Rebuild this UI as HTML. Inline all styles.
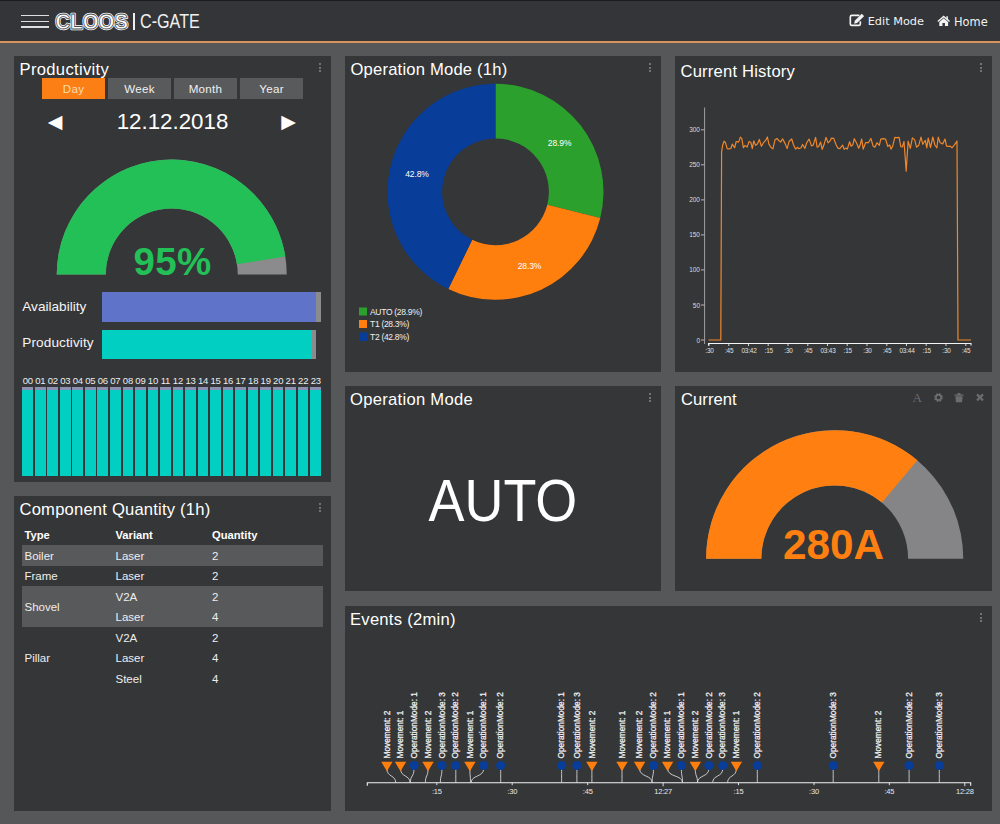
<!DOCTYPE html>
<html><head><meta charset="utf-8"><title>C-GATE</title>
<style>
*{box-sizing:border-box;margin:0;padding:0}
html,body{width:1000px;height:824px;overflow:hidden;background:#555759;font-family:"Liberation Sans",sans-serif;color:#fff}
#hdr{position:absolute;left:0;top:0;width:1000px;height:43px;background:#333538;border-top:1px solid #1c1c1e;border-bottom:2px solid #d6935e}
.panel{position:absolute;background:#343638}
.title{position:absolute;left:5.5px;top:4px;font-size:16.6px;line-height:20px;white-space:nowrap;color:#fff;letter-spacing:0.2px}
.dots{position:absolute;right:9.4px;top:7px;width:3px;height:9px}
.dots i{display:block;width:2px;height:2px;background:#707274;margin-bottom:1.5px}
.abs{position:absolute}
.btn{position:absolute;top:22px;width:63px;height:21px;background:#595a5c;color:#f0f0f0;font-size:11.6px;line-height:22px;text-align:center;letter-spacing:0.3px}
.btn.on{background:#fb7f15;color:#fbdcae}
.arr{font-family:"DejaVu Sans",sans-serif;font-size:19px;line-height:26px;color:#fff}
.lab{font-size:13.6px;line-height:18px;white-space:nowrap;color:#f4f4f4}
.hl{position:absolute;top:319px;font-size:9.5px;line-height:11px;width:10.5px;text-align:center;color:#eee;letter-spacing:-0.2px}
.hb{position:absolute;top:331px;width:10.8px;height:89px;background:#00cfc1}
.hb b{display:block;height:3px;background:#8d8fb3}
table{position:absolute;left:8px;top:28.5px;width:301px;border-collapse:collapse;font-size:11.5px;color:#eee}
td,th{height:20.5px;padding:1px 0 0 2.5px;text-align:left;vertical-align:middle;line-height:14px}
th{font-weight:bold;color:#fff;font-size:11.2px}
tr.g td{background:#58595b}
svg text{font-family:"Liberation Sans",sans-serif}
</style></head><body>
<div id="hdr">
<div class="abs" style="left:21px;top:13.7px;width:27.5px;height:1.7px;background:#dedede"></div>
<div class="abs" style="left:21px;top:19.6px;width:27.5px;height:1.7px;background:#dedede"></div>
<div class="abs" style="left:21px;top:25.2px;width:27.5px;height:1.7px;background:#dedede"></div>
<svg class="abs" style="left:50px;top:5px" width="90" height="30" viewBox="0 0 90 30"><g font-weight="bold" font-size="21.5"><text x="5.5" y="22.9" fill="#fff" stroke="#fff" stroke-width="2.4" stroke-linejoin="round" textLength="72.5" lengthAdjust="spacingAndGlyphs">CLOOS</text><text x="5.5" y="22.9" fill="none" stroke="#4a4c4f" stroke-width="0.8" textLength="72.5" lengthAdjust="spacingAndGlyphs">CLOOS</text></g></svg>
<div class="abs" style="left:133.3px;top:12px;width:1.4px;height:16.5px;background:#eee"></div>
<div class="abs" id="cgate" style="left:140px;top:8px;font-size:19.5px;line-height:24px;color:#f0f0f0;transform-origin:0 0;transform:scaleX(0.828);white-space:nowrap">C-GATE</div>
<svg class="abs" style="left:848.7px;top:12.3px" width="15.4" height="14.3" viewBox="0 0 14 13"><path d="M9.5 2.2H2.6Q1.2 2.2 1.2 3.6V9.9Q1.2 11.3 2.6 11.3H8.9Q10.3 11.3 10.3 9.9V7.6" fill="none" stroke="#f2f2f2" stroke-width="1.5"/><path d="M5.2 7L11.6 0.6L13.8 2.8L7.4 9.2L4.7 9.7Z" fill="#f2f2f2"/></svg>
<div class="abs" id="edit" style="left:867.7px;top:13.3px;font-family:'DejaVu Sans',sans-serif;font-size:11.3px;line-height:16px;color:#f2f2f2;white-space:nowrap">Edit Mode</div>
<svg class="abs" style="left:936.6px;top:13.8px" width="13.4" height="11.5" viewBox="0 0 14 12"><path d="M7 0.6L0.4 6.2L1.3 7.2L7 2.5L12.7 7.2L13.6 6.2L11.4 4.3V1.3H9.8V3Z" fill="#f2f2f2"/><path d="M2.4 7.2L7 3.5L11.6 7.2V11.4H8.3V8.3H5.7V11.4H2.4Z" fill="#f2f2f2"/></svg>
<div class="abs" id="home" style="left:954px;top:13.3px;font-family:'DejaVu Sans',sans-serif;font-size:11.4px;line-height:16px;color:#f2f2f2;white-space:nowrap">Home</div>
</div>
<div class="panel" id="p1" style="left:14px;top:56px;width:317px;height:426px"><div class="title" style="letter-spacing:0.32px">Productivity</div><div class="dots"><i></i><i></i><i></i></div>
<div class="btn on" style="left:28px">Day</div><div class="btn" style="left:94px">Week</div><div class="btn" style="left:160px">Month</div><div class="btn" style="left:226px">Year</div>
<div class="abs" id="date" style="left:0;width:317px;top:53px;text-align:center;font-size:22.3px;line-height:26px">12.12.2018</div>
<div class="abs arr" style="left:33.8px;top:52px">&#9664;</div>
<div class="abs arr" style="left:267.2px;top:52px">&#9654;</div>
<svg class="abs" style="left:0;top:100px" width="317" height="125" viewBox="0 100 317 125">
<path d="M42.75 218.5 A115 115 0 0 1 272.75 218.5 L223.75 218.5 A66 66 0 0 0 91.75 218.5 Z" fill="#8b8b8d"/>
<path d="M42.75 218.5 A115 115 0 0 1 271.33 200.51 L222.94 208.18 A66 66 0 0 0 91.75 218.5 Z" fill="#23bf57"/>
</svg>
<div class="abs" id="pct" style="left:0;width:317px;top:185.5px;text-align:center;font-size:38.5px;line-height:40px;font-weight:bold;color:#23bf57;letter-spacing:0.3px">95%</div>
<div class="abs lab" style="left:8.3px;top:241.5px">Availability</div>
<div class="abs lab" style="left:8.3px;top:278.4px;letter-spacing:0.1px">Productivity</div>
<div class="abs" style="left:88px;top:236px;width:219.2px;height:29.5px;background:#8b8b8d"><div style="width:213.7px;height:29.5px;background:#5f73c8"></div></div>
<div class="abs" style="left:88px;top:273.5px;width:214px;height:29.5px;background:#8b8b8d"><div style="width:209.5px;height:29.5px;background:#00cfc1"></div></div>
<span class="hl" style="left:8.5px">00</span><span class="hl" style="left:21.0px">01</span><span class="hl" style="left:33.5px">02</span><span class="hl" style="left:46.1px">03</span><span class="hl" style="left:58.6px">04</span><span class="hl" style="left:71.1px">05</span><span class="hl" style="left:83.6px">06</span><span class="hl" style="left:96.1px">07</span><span class="hl" style="left:108.7px">08</span><span class="hl" style="left:121.2px">09</span><span class="hl" style="left:133.7px">10</span><span class="hl" style="left:146.2px">11</span><span class="hl" style="left:158.7px">12</span><span class="hl" style="left:171.3px">13</span><span class="hl" style="left:183.8px">14</span><span class="hl" style="left:196.3px">15</span><span class="hl" style="left:208.8px">16</span><span class="hl" style="left:221.3px">17</span><span class="hl" style="left:233.9px">18</span><span class="hl" style="left:246.4px">19</span><span class="hl" style="left:258.9px">20</span><span class="hl" style="left:271.4px">21</span><span class="hl" style="left:283.9px">22</span><span class="hl" style="left:296.5px">23</span><div class="hb" style="left:8.3px"><b></b></div><div class="hb" style="left:20.8px"><b></b></div><div class="hb" style="left:33.3px"><b></b></div><div class="hb" style="left:45.9px"><b></b></div><div class="hb" style="left:58.4px"><b></b></div><div class="hb" style="left:70.9px"><b></b></div><div class="hb" style="left:83.4px"><b></b></div><div class="hb" style="left:95.9px"><b></b></div><div class="hb" style="left:108.5px"><b></b></div><div class="hb" style="left:121.0px"><b></b></div><div class="hb" style="left:133.5px"><b></b></div><div class="hb" style="left:146.0px"><b></b></div><div class="hb" style="left:158.5px"><b></b></div><div class="hb" style="left:171.1px"><b></b></div><div class="hb" style="left:183.6px"><b></b></div><div class="hb" style="left:196.1px"><b></b></div><div class="hb" style="left:208.6px"><b></b></div><div class="hb" style="left:221.1px"><b></b></div><div class="hb" style="left:233.7px"><b></b></div><div class="hb" style="left:246.2px"><b></b></div><div class="hb" style="left:258.7px"><b></b></div><div class="hb" style="left:271.2px"><b></b></div><div class="hb" style="left:283.7px"><b></b></div><div class="hb" style="left:296.3px"><b></b></div></div>
<div class="panel" id="p2" style="left:14px;top:496px;width:317px;height:315px"><div class="title">Component Quantity (1h)</div><div class="dots"><i></i><i></i><i></i></div>
<table><colgroup><col style="width:91px"><col style="width:96.5px"><col></colgroup>
<tr><th>Type</th><th>Variant</th><th>Quantity</th></tr>
<tr class="g"><td>Boiler</td><td>Laser</td><td>2</td></tr>
<tr><td>Frame</td><td>Laser</td><td>2</td></tr>
<tr class="g"><td rowspan="2">Shovel</td><td>V2A</td><td>2</td></tr>
<tr class="g"><td>Laser</td><td>4</td></tr>
<tr><td rowspan="3">Pillar</td><td>V2A</td><td>2</td></tr>
<tr><td>Laser</td><td>4</td></tr>
<tr><td>Steel</td><td>4</td></tr>
</table></div>
<div class="panel" id="p3" style="left:345px;top:56px;width:316px;height:316px"><div class="title">Operation Mode (1h)</div><div class="dots"><i></i><i></i><i></i></div>
<svg class="abs" style="left:0;top:0" width="316" height="316" viewBox="0 0 316 316">
<path d="M150.50 27.80 A108 108 0 0 1 255.27 162.00 L202.30 148.75 A53.4 53.4 0 0 0 150.50 82.40 Z" fill="#2ca02c"/><path d="M255.27 162.00 A108 108 0 0 1 103.29 232.94 L127.16 183.83 A53.4 53.4 0 0 0 202.30 148.75 Z" fill="#ff7f0e"/><path d="M103.29 232.94 A108 108 0 0 1 150.50 27.80 L150.50 82.40 A53.4 53.4 0 0 0 127.16 183.83 Z" fill="#083d99"/>
<g font-size="8.5" fill="#fff" text-anchor="middle" letter-spacing="-0.12"><text x="214.6" y="90.2">28.9%</text><text x="184.5" y="213">28.3%</text><text x="72" y="121">42.8%</text></g>
<rect x="14" y="251.5" width="8" height="8" fill="#2ca02c"/><rect x="14" y="264" width="8" height="8" fill="#ff7f0e"/><rect x="14" y="276.5" width="8" height="8.5" fill="#083d99"/>
<g font-size="8.5" fill="#f0f0f0" letter-spacing="-0.3"><text x="25" y="258.9">AUTO (28.9%)</text><text x="25" y="271.4">T1 (28.3%)</text><text x="25" y="283.9">T2 (42.8%)</text></g>
</svg></div>
<div class="panel" id="p4" style="left:675px;top:56px;width:317px;height:316px"><div class="title" style="top:5.5px">Current History</div><div class="dots"><i></i><i></i><i></i></div>
<svg class="abs" style="left:0;top:0" width="317" height="316" viewBox="0 0 317 316">
<line x1="29.6" x2="29.6" y1="51.5" y2="288" stroke="#a0a0a2" stroke-width="1"/>
<g stroke="#b5b5b7" stroke-width="1"><line x1="26" x2="29.5" y1="284.0" y2="284.0"/><line x1="26" x2="29.5" y1="249.0" y2="249.0"/><line x1="26" x2="29.5" y1="213.9" y2="213.9"/><line x1="26" x2="29.5" y1="178.9" y2="178.9"/><line x1="26" x2="29.5" y1="143.9" y2="143.9"/><line x1="26" x2="29.5" y1="108.8" y2="108.8"/><line x1="26" x2="29.5" y1="73.8" y2="73.8"/></g>
<path d="M33.5 289.5V287.5H296V289.5" fill="none" stroke="#f4f4f4" stroke-width="1.1"/>
<g stroke="#f4f4f4" stroke-width="0.8"><line x1="34.0" x2="34.0" y1="287.5" y2="290"/><line x1="53.8" x2="53.8" y1="287.5" y2="290"/><line x1="73.5" x2="73.5" y1="287.5" y2="290"/><line x1="93.2" x2="93.2" y1="287.5" y2="290"/><line x1="113.0" x2="113.0" y1="287.5" y2="290"/><line x1="132.8" x2="132.8" y1="287.5" y2="290"/><line x1="152.5" x2="152.5" y1="287.5" y2="290"/><line x1="172.2" x2="172.2" y1="287.5" y2="290"/><line x1="192.0" x2="192.0" y1="287.5" y2="290"/><line x1="211.8" x2="211.8" y1="287.5" y2="290"/><line x1="231.5" x2="231.5" y1="287.5" y2="290"/><line x1="251.2" x2="251.2" y1="287.5" y2="290"/><line x1="271.0" x2="271.0" y1="287.5" y2="290"/><line x1="290.8" x2="290.8" y1="287.5" y2="290"/></g>
<g font-size="6.5" fill="#dcdcdc" text-anchor="end"><text x="25" y="286.5">0</text><text x="25" y="251.5">50</text><text x="25" y="216.4">100</text><text x="25" y="181.4">150</text><text x="25" y="146.4">200</text><text x="25" y="111.3">250</text><text x="25" y="76.3">300</text></g>
<g font-size="6.4" fill="#e0e0e0" text-anchor="middle" letter-spacing="-0.15"><text x="34.5" y="296.8">:30</text><text x="54.2" y="296.8">:45</text><text x="74.0" y="296.8">03:42</text><text x="93.8" y="296.8">:15</text><text x="113.5" y="296.8">:30</text><text x="133.2" y="296.8">:45</text><text x="153.0" y="296.8">03:43</text><text x="172.8" y="296.8">:15</text><text x="192.5" y="296.8">:30</text><text x="212.2" y="296.8">:45</text><text x="232.0" y="296.8">03:44</text><text x="251.8" y="296.8">:15</text><text x="271.5" y="296.8">:30</text><text x="291.2" y="296.8">:45</text></g>
<path d="M33.5 284.0 L45.8 284.0 L46.6 96.2 L47.6 89.3 L49.1 85.2 L50.5 86.7 L52.2 92.7 L54.1 92.9 L55.9 92.5 L57.3 88.1 L59.6 91.8 L61.2 85.5 L63.6 86.1 L65.4 81.1 L66.8 82.6 L68.4 91.6 L69.9 89.5 L72.1 91.1 L74.1 85.4 L75.9 86.5 L77.3 92.7 L78.8 84.8 L80.6 89.4 L82.6 87.7 L84.3 83.4 L86.4 90.3 L88.4 86.8 L90.8 84.2 L92.4 81.0 L93.9 88.1 L96.1 91.5 L97.9 92.9 L100.0 83.8 L102.0 82.4 L103.7 84.6 L105.7 86.1 L107.6 82.8 L110.0 87.4 L112.1 92.6 L114.2 85.2 L116.7 83.0 L118.4 88.5 L120.5 93.1 L122.3 91.3 L123.8 92.7 L126.0 91.8 L127.6 88.5 L129.9 92.4 L131.8 86.5 L134.1 83.1 L136.5 89.9 L138.3 88.9 L140.6 81.3 L142.1 91.2 L143.7 90.5 L145.6 86.0 L147.2 93.4 L149.0 88.8 L151.0 81.4 L153.1 86.9 L155.1 84.9 L156.5 82.1 L158.7 82.4 L161.0 88.5 L162.8 92.1 L164.8 92.6 L166.2 90.8 L167.7 89.1 L169.1 93.4 L170.6 92.1 L172.3 93.1 L174.6 85.7 L176.1 90.2 L177.8 88.8 L179.3 82.7 L181.8 87.5 L183.7 92.3 L185.1 89.1 L186.7 83.0 L188.2 93.1 L190.6 86.7 L192.1 86.6 L193.4 86.7 L195.9 82.5 L198.1 90.1 L199.8 91.3 L202.0 86.7 L204.3 89.3 L205.8 83.2 L208.3 82.7 L210.6 83.1 L212.8 90.5 L214.7 88.9 L216.0 93.1 L217.7 90.1 L219.8 81.3 L221.6 81.6 L224.1 81.4 L225.8 90.6 L227.4 90.9 L229.0 85.5 L231.2 115.1 L233.1 85.2 L235.3 92.3 L237.4 81.9 L239.7 83.9 L241.5 91.2 L243.8 89.2 L246.0 81.2 L247.8 88.3 L250.3 84.3 L251.8 91.8 L253.2 82.0 L255.5 91.6 L257.8 81.0 L259.9 89.0 L261.9 91.8 L263.2 81.2 L265.2 86.8 L267.7 87.9 L270.0 83.0 L271.6 90.2 L273.2 90.4 L275.2 90.1 L277.0 91.8 L279.4 88.9 L281.3 86.1 L282.0 85.0 L283.0 284.0 L296.0 284.0" fill="none" stroke="#f0872b" stroke-width="1.2" stroke-linejoin="round"/>
</svg></div>
<div class="panel" id="p5" style="left:345px;top:386px;width:316px;height:205px"><div class="title" style="left:5px;letter-spacing:0.28px">Operation Mode</div><div class="dots"><i></i><i></i><i></i></div>
<div class="abs" id="auto" style="left:0;width:316px;top:80px;text-align:center;font-size:59.6px;line-height:70px;transform:scaleX(0.905);transform-origin:156.7px 0">AUTO</div></div>
<div class="panel" id="p6" style="left:675px;top:386px;width:317px;height:205px"><div class="title" style="left:6px;letter-spacing:0.05px">Current</div>
<svg class="abs" style="left:0;top:0" width="317" height="205" viewBox="0 0 317 205">
<path d="M31.10000000000005 172.79999999999995 A128.6 128.6 0 0 1 288.30000000000007 172.79999999999995 L233.10000000000005 172.79999999999995 A73.4 73.4 0 0 0 86.30000000000004 172.79999999999995 Z" fill="#858588"/><path d="M31.10000000000005 172.79999999999995 A128.6 128.6 0 0 1 242.36 74.29 L206.88 116.57 A73.4 73.4 0 0 0 86.30000000000004 172.79999999999995 Z" fill="#ff8010"/>
<g fill="#6c6c6f"><text x="237.6" y="16" font-size="13" style="font-family:'Liberation Serif',serif">A</text>
<circle cx="263.5" cy="11.5" r="3.2" fill="none" stroke="#6c6c6f" stroke-width="2.4" stroke-dasharray="1.6 0.9"/><circle cx="263.5" cy="11.5" r="2.6" fill="none" stroke="#6c6c6f" stroke-width="1.6"/>
<path d="M279.5 8.5h9v1.2h-9zM282.5 7h3v1.5h-3zM280.4 10.3h7.2l-0.5 6h-6.2z"/>
<path d="M301.2 9.2L302.8 7.6L305 9.8L307.2 7.6L308.8 9.2L306.6 11.4L308.8 13.6L307.2 15.2L305 13L302.8 15.2L301.2 13.6L303.4 11.4Z"/></g>
</svg>
<div class="abs" id="amp" style="left:0;width:317px;top:136.7px;text-align:center;font-size:42.3px;line-height:44px;font-weight:bold;color:#ff8010">280A</div></div>
<div class="panel" id="p7" style="left:345px;top:606px;width:647px;height:205px"><div class="title" style="left:5px;letter-spacing:0.26px">Events (2min)</div><div class="dots"><i></i><i></i><i></i></div>
<svg class="abs" style="left:0;top:0" width="647" height="205" viewBox="0 0 647 205">
<path d="M22.3 179.7V176.7H625.7V179.7" fill="none" stroke="#f4f4f4" stroke-width="1.1"/>
<path d="M41.9 162.5 C41.9 171.5 50.7 168.7 50.7 176.7" fill="none" stroke="#d8d8d8" stroke-width="0.9"/>
<path d="M55.5 162.5 C55.5 171.5 65.0 168.7 65.0 176.7" fill="none" stroke="#d8d8d8" stroke-width="0.9"/>
<path d="M69.0 162.5 C69.0 171.5 65.4 168.7 65.4 176.7" fill="none" stroke="#d8d8d8" stroke-width="0.9"/>
<path d="M83.0 162.5 C83.0 171.5 80.4 168.7 80.4 176.7" fill="none" stroke="#d8d8d8" stroke-width="0.9"/>
<path d="M96.9 162.5 C96.9 171.5 95.4 168.7 95.4 176.7" fill="none" stroke="#d8d8d8" stroke-width="0.9"/>
<path d="M110.8 162.5 C110.8 171.5 110.8 168.7 110.8 176.7" fill="none" stroke="#d8d8d8" stroke-width="0.9"/>
<path d="M124.9 162.5 C124.9 171.5 125.5 168.7 125.5 176.7" fill="none" stroke="#d8d8d8" stroke-width="0.9"/>
<path d="M138.7 162.5 C138.7 171.5 126.2 168.7 126.2 176.7" fill="none" stroke="#d8d8d8" stroke-width="0.9"/>
<path d="M155.7 162.5 C155.7 171.5 155.7 168.7 155.7 176.7" fill="none" stroke="#d8d8d8" stroke-width="0.9"/>
<path d="M216.6 162.5 C216.6 171.5 216.6 168.7 216.6 176.7" fill="none" stroke="#d8d8d8" stroke-width="0.9"/>
<path d="M231.9 162.5 C231.9 171.5 231.9 168.7 231.9 176.7" fill="none" stroke="#d8d8d8" stroke-width="0.9"/>
<path d="M246.9 162.5 C246.9 171.5 246.9 168.7 246.9 176.7" fill="none" stroke="#d8d8d8" stroke-width="0.9"/>
<path d="M277.0 162.5 C277.0 171.5 277.0 168.7 277.0 176.7" fill="none" stroke="#d8d8d8" stroke-width="0.9"/>
<path d="M294.6 162.5 C294.6 171.5 307.1 168.7 307.1 176.7" fill="none" stroke="#d8d8d8" stroke-width="0.9"/>
<path d="M308.5 162.5 C308.5 171.5 307.1 168.7 307.1 176.7" fill="none" stroke="#d8d8d8" stroke-width="0.9"/>
<path d="M322.6 162.5 C322.6 171.5 337.5 168.7 337.5 176.7" fill="none" stroke="#d8d8d8" stroke-width="0.9"/>
<path d="M336.4 162.5 C336.4 171.5 337.5 168.7 337.5 176.7" fill="none" stroke="#d8d8d8" stroke-width="0.9"/>
<path d="M350.3 162.5 C350.3 171.5 352.5 168.7 352.5 176.7" fill="none" stroke="#d8d8d8" stroke-width="0.9"/>
<path d="M363.9 162.5 C363.9 171.5 352.5 168.7 352.5 176.7" fill="none" stroke="#d8d8d8" stroke-width="0.9"/>
<path d="M377.8 162.5 C377.8 171.5 367.7 168.7 367.7 176.7" fill="none" stroke="#d8d8d8" stroke-width="0.9"/>
<path d="M391.4 162.5 C391.4 171.5 382.6 168.7 382.6 176.7" fill="none" stroke="#d8d8d8" stroke-width="0.9"/>
<path d="M412.3 162.5 C412.3 171.5 412.3 168.7 412.3 176.7" fill="none" stroke="#d8d8d8" stroke-width="0.9"/>
<path d="M488.2 162.5 C488.2 171.5 488.2 168.7 488.2 176.7" fill="none" stroke="#d8d8d8" stroke-width="0.9"/>
<path d="M533.8 162.5 C533.8 171.5 533.8 168.7 533.8 176.7" fill="none" stroke="#d8d8d8" stroke-width="0.9"/>
<path d="M564.1 162.5 C564.1 171.5 564.1 168.7 564.1 176.7" fill="none" stroke="#d8d8d8" stroke-width="0.9"/>
<path d="M594.3 162.5 C594.3 171.5 594.3 168.7 594.3 176.7" fill="none" stroke="#d8d8d8" stroke-width="0.9"/>
<path d="M36.2 155.7 h11.4 l-5.7 9.6z" fill="#ff7f0e"/>
<text transform="translate(44.5 152.5) rotate(-90)" font-size="8.3" fill="#f4f4f4" stroke="#f4f4f4" stroke-width="0.25">Movement: 2</text>
<path d="M49.8 155.7 h11.4 l-5.7 9.6z" fill="#ff7f0e"/>
<text transform="translate(58.1 152.5) rotate(-90)" font-size="8.3" fill="#f4f4f4" stroke="#f4f4f4" stroke-width="0.25">Movement: 1</text>
<circle cx="69.0" cy="159.5" r="4.6" fill="#083d99"/>
<text transform="translate(71.6 152.5) rotate(-90)" font-size="8.3" fill="#f4f4f4" stroke="#f4f4f4" stroke-width="0.25">OperationMode: 1</text>
<path d="M77.3 155.7 h11.4 l-5.7 9.6z" fill="#ff7f0e"/>
<text transform="translate(85.6 152.5) rotate(-90)" font-size="8.3" fill="#f4f4f4" stroke="#f4f4f4" stroke-width="0.25">Movement: 2</text>
<circle cx="96.9" cy="159.5" r="4.6" fill="#083d99"/>
<text transform="translate(99.5 152.5) rotate(-90)" font-size="8.3" fill="#f4f4f4" stroke="#f4f4f4" stroke-width="0.25">OperationMode: 3</text>
<circle cx="110.8" cy="159.5" r="4.6" fill="#083d99"/>
<text transform="translate(113.4 152.5) rotate(-90)" font-size="8.3" fill="#f4f4f4" stroke="#f4f4f4" stroke-width="0.25">OperationMode: 2</text>
<path d="M119.2 155.7 h11.4 l-5.7 9.6z" fill="#ff7f0e"/>
<text transform="translate(127.5 152.5) rotate(-90)" font-size="8.3" fill="#f4f4f4" stroke="#f4f4f4" stroke-width="0.25">Movement: 1</text>
<circle cx="138.7" cy="159.5" r="4.6" fill="#083d99"/>
<text transform="translate(141.3 152.5) rotate(-90)" font-size="8.3" fill="#f4f4f4" stroke="#f4f4f4" stroke-width="0.25">OperationMode: 1</text>
<circle cx="155.7" cy="159.5" r="4.6" fill="#083d99"/>
<text transform="translate(158.3 152.5) rotate(-90)" font-size="8.3" fill="#f4f4f4" stroke="#f4f4f4" stroke-width="0.25">OperationMode: 2</text>
<circle cx="216.6" cy="159.5" r="4.6" fill="#083d99"/>
<text transform="translate(219.2 152.5) rotate(-90)" font-size="8.3" fill="#f4f4f4" stroke="#f4f4f4" stroke-width="0.25">OperationMode: 1</text>
<circle cx="231.9" cy="159.5" r="4.6" fill="#083d99"/>
<text transform="translate(234.5 152.5) rotate(-90)" font-size="8.3" fill="#f4f4f4" stroke="#f4f4f4" stroke-width="0.25">OperationMode: 3</text>
<path d="M241.2 155.7 h11.4 l-5.7 9.6z" fill="#ff7f0e"/>
<text transform="translate(249.5 152.5) rotate(-90)" font-size="8.3" fill="#f4f4f4" stroke="#f4f4f4" stroke-width="0.25">Movement: 2</text>
<path d="M271.3 155.7 h11.4 l-5.7 9.6z" fill="#ff7f0e"/>
<text transform="translate(279.6 152.5) rotate(-90)" font-size="8.3" fill="#f4f4f4" stroke="#f4f4f4" stroke-width="0.25">Movement: 1</text>
<path d="M288.9 155.7 h11.4 l-5.7 9.6z" fill="#ff7f0e"/>
<text transform="translate(297.2 152.5) rotate(-90)" font-size="8.3" fill="#f4f4f4" stroke="#f4f4f4" stroke-width="0.25">Movement: 2</text>
<circle cx="308.5" cy="159.5" r="4.6" fill="#083d99"/>
<text transform="translate(311.1 152.5) rotate(-90)" font-size="8.3" fill="#f4f4f4" stroke="#f4f4f4" stroke-width="0.25">OperationMode: 2</text>
<path d="M316.9 155.7 h11.4 l-5.7 9.6z" fill="#ff7f0e"/>
<text transform="translate(325.2 152.5) rotate(-90)" font-size="8.3" fill="#f4f4f4" stroke="#f4f4f4" stroke-width="0.25">Movement: 1</text>
<circle cx="336.4" cy="159.5" r="4.6" fill="#083d99"/>
<text transform="translate(339.0 152.5) rotate(-90)" font-size="8.3" fill="#f4f4f4" stroke="#f4f4f4" stroke-width="0.25">OperationMode: 1</text>
<path d="M344.6 155.7 h11.4 l-5.7 9.6z" fill="#ff7f0e"/>
<text transform="translate(352.9 152.5) rotate(-90)" font-size="8.3" fill="#f4f4f4" stroke="#f4f4f4" stroke-width="0.25">Movement: 2</text>
<circle cx="363.9" cy="159.5" r="4.6" fill="#083d99"/>
<text transform="translate(366.5 152.5) rotate(-90)" font-size="8.3" fill="#f4f4f4" stroke="#f4f4f4" stroke-width="0.25">OperationMode: 2</text>
<circle cx="377.8" cy="159.5" r="4.6" fill="#083d99"/>
<text transform="translate(380.4 152.5) rotate(-90)" font-size="8.3" fill="#f4f4f4" stroke="#f4f4f4" stroke-width="0.25">OperationMode: 3</text>
<path d="M385.7 155.7 h11.4 l-5.7 9.6z" fill="#ff7f0e"/>
<text transform="translate(394.0 152.5) rotate(-90)" font-size="8.3" fill="#f4f4f4" stroke="#f4f4f4" stroke-width="0.25">Movement: 1</text>
<circle cx="412.3" cy="159.5" r="4.6" fill="#083d99"/>
<text transform="translate(414.9 152.5) rotate(-90)" font-size="8.3" fill="#f4f4f4" stroke="#f4f4f4" stroke-width="0.25">OperationMode: 2</text>
<circle cx="488.2" cy="159.5" r="4.6" fill="#083d99"/>
<text transform="translate(490.8 152.5) rotate(-90)" font-size="8.3" fill="#f4f4f4" stroke="#f4f4f4" stroke-width="0.25">OperationMode: 3</text>
<path d="M528.1 155.7 h11.4 l-5.7 9.6z" fill="#ff7f0e"/>
<text transform="translate(536.4 152.5) rotate(-90)" font-size="8.3" fill="#f4f4f4" stroke="#f4f4f4" stroke-width="0.25">Movement: 2</text>
<circle cx="564.1" cy="159.5" r="4.6" fill="#083d99"/>
<text transform="translate(566.7 152.5) rotate(-90)" font-size="8.3" fill="#f4f4f4" stroke="#f4f4f4" stroke-width="0.25">OperationMode: 2</text>
<circle cx="594.3" cy="159.5" r="4.6" fill="#083d99"/>
<text transform="translate(596.9 152.5) rotate(-90)" font-size="8.3" fill="#f4f4f4" stroke="#f4f4f4" stroke-width="0.25">OperationMode: 3</text>
<line x1="91.8" x2="91.8" y1="176.7" y2="179.2" stroke="#f0f0f0" stroke-width="0.9"/>
<text x="91.8" y="187.8" font-size="7.5" fill="#e8e8e8" text-anchor="middle" letter-spacing="-0.2">:15</text>
<line x1="167.2" x2="167.2" y1="176.7" y2="179.2" stroke="#f0f0f0" stroke-width="0.9"/>
<text x="167.2" y="187.8" font-size="7.5" fill="#e8e8e8" text-anchor="middle" letter-spacing="-0.2">:30</text>
<line x1="242.7" x2="242.7" y1="176.7" y2="179.2" stroke="#f0f0f0" stroke-width="0.9"/>
<text x="242.7" y="187.8" font-size="7.5" fill="#e8e8e8" text-anchor="middle" letter-spacing="-0.2">:45</text>
<line x1="318.1" x2="318.1" y1="176.7" y2="180.2" stroke="#f0f0f0" stroke-width="0.9"/>
<text x="318.1" y="187.8" font-size="7.5" fill="#e8e8e8" text-anchor="middle" letter-spacing="-0.2">12:27</text>
<line x1="393.5" x2="393.5" y1="176.7" y2="179.2" stroke="#f0f0f0" stroke-width="0.9"/>
<text x="393.5" y="187.8" font-size="7.5" fill="#e8e8e8" text-anchor="middle" letter-spacing="-0.2">:15</text>
<line x1="469.0" x2="469.0" y1="176.7" y2="179.2" stroke="#f0f0f0" stroke-width="0.9"/>
<text x="469.0" y="187.8" font-size="7.5" fill="#e8e8e8" text-anchor="middle" letter-spacing="-0.2">:30</text>
<line x1="544.4" x2="544.4" y1="176.7" y2="179.2" stroke="#f0f0f0" stroke-width="0.9"/>
<text x="544.4" y="187.8" font-size="7.5" fill="#e8e8e8" text-anchor="middle" letter-spacing="-0.2">:45</text>
<line x1="619.8" x2="619.8" y1="176.7" y2="180.2" stroke="#f0f0f0" stroke-width="0.9"/>
<text x="619.8" y="187.8" font-size="7.5" fill="#e8e8e8" text-anchor="middle" letter-spacing="-0.2">12:28</text>
</svg></div>
</body></html>
